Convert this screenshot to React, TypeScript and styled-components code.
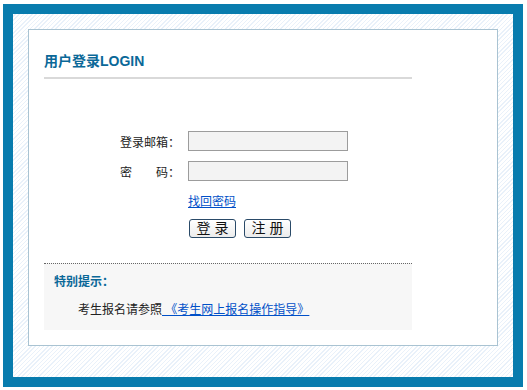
import React from 'react';
import styled, { createGlobalStyle } from 'styled-components';

const GlobalStyle = createGlobalStyle`
  html, body {
    margin: 0;
    padding: 0;
    background: #fff;
  }
  body {
    font-family: "Liberation Sans", "Noto Sans CJK SC", sans-serif;
    font-size: 12px;
    color: #222;
  }
`;

const Frame = styled.div`
  box-sizing: border-box;
  width: 520px;
  height: 383px;
  margin: 4px 0 0 3px;
  padding: 15px;
  border: 10px solid #087cae;
  background-color: #fff;
  background-image: repeating-linear-gradient(
    -45deg,
    #fff 0px,
    #fff 2px,
    #e9f1fa 2px,
    #e9f1fa 3px
  );
`;

const Panel = styled.div`
  border: 1px solid #a9c3d2;
  background: #fff;
  padding: 0 85px 15px 15px;
`;

const Title = styled.h2`
  margin: 0;
  padding: 18px 0 3px;
  line-height: 26px;
  font-size: 14px;
  font-weight: bold;
  color: #0a6898;
  border-bottom: 2px solid #d9d9d9;
`;

const Form = styled.div`
  display: grid;
  grid-template-columns: 136px 160px;
  grid-template-rows: 20px 20px 18px 19px;
  column-gap: 8px;
  row-gap: 10px;
  margin-top: 52px;
`;

const Label = styled.label`
  display: flex;
  align-items: center;
  justify-content: flex-end;
  color: #222;
  white-space: pre;
`;

const Field = styled.input`
  box-sizing: border-box;
  width: 160px;
  height: 20px;
  margin: 0;
  padding: 0 4px;
  border: 1px solid #9c9c9c;
  background: #f3f3f3;
  font-size: 12px;
  outline: none;
`;

const LinkCell = styled.div`
  grid-column: 2;
  display: flex;
  align-items: center;
`;

const Link = styled.a`
  color: #0050c8;
  text-decoration: underline;
  cursor: pointer;
  white-space: pre;
`;

const Actions = styled.div`
  grid-column: 2;
  display: flex;
  gap: 8px;
  padding-left: 1px;
`;

const Button = styled.button`
  box-sizing: border-box;
  width: 47px;
  height: 19px;
  margin: 0;
  padding: 0;
  border: 1px solid #2a4a68;
  border-radius: 3px;
  background: linear-gradient(#ffffff, #ececec);
  font-family: "Liberation Sans", "Noto Sans CJK SC", sans-serif;
  font-size: 14px;
  line-height: 17px;
  color: #111;
  cursor: pointer;
  white-space: pre;
`;

const Tip = styled.div`
  margin-top: 25px;
  border-top: 1px dotted #666;
  background: #f7f7f7;
  padding: 10px 10px;
`;

const TipTitle = styled.div`
  font-weight: bold;
  line-height: 16px;
  color: #0a6898;
`;

const TipText = styled.p`
  margin: 10px 0 0;
  line-height: 20px;
  text-indent: 2em;
  color: #222;
`;

export default function App() {
  return (
    <>
      <GlobalStyle />
      <Frame>
        <Panel>
          <Title>用户登录LOGIN</Title>
          <Form>
            <Label htmlFor="email">登录邮箱：</Label>
            <Field id="email" type="text" />
            <Label htmlFor="pwd">密　　码：</Label>
            <Field id="pwd" type="password" />
            <LinkCell>
              <Link>找回密码</Link>
            </LinkCell>
            <Actions>
              <Button>登 录</Button>
              <Button>注 册</Button>
            </Actions>
          </Form>
          <Tip>
            <TipTitle>特别提示：</TipTitle>
            <TipText>
              考生报名请参照<Link> 《考生网上报名操作指导》</Link>
            </TipText>
          </Tip>
        </Panel>
      </Frame>
    </>
  );
}
